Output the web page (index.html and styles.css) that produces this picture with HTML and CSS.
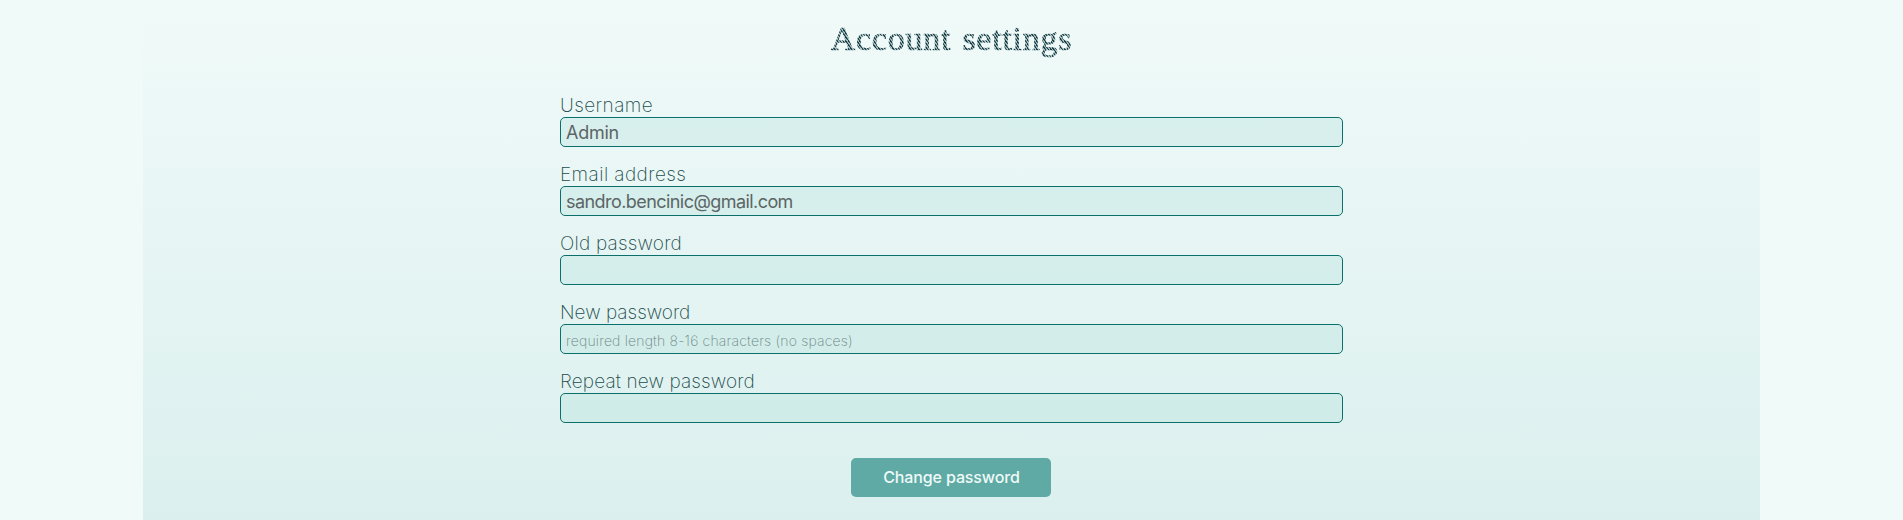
FILE: index.html
```html
<!DOCTYPE html>
<html lang="en">
<head>
<meta charset="utf-8">
<title>Account settings</title>
<link rel="stylesheet" href="styles.css">
</head>
<body>
<main class="panel">
  <h1 class="title">Account settings</h1>
  <form class="form">
    <div class="field"><label class="label label-wide" for="username">Username</label><input class="input name-value" id="username" type="text" value="Admin"></div>
    <div class="field"><label class="label label-wide" for="email">Email address</label><input class="input email-value" id="email" type="text" value="sandro.bencinic@gmail.com"></div>
    <div class="field"><label class="label label-old" for="old">Old password</label><input class="input" id="old" type="password"></div>
    <div class="field"><label class="label" for="new">New password</label><input class="input" id="new" type="password" placeholder="required length 8-16 characters (no spaces)"></div>
    <div class="field"><label class="label label-repeat" for="repeat">Repeat new password</label><input class="input" id="repeat" type="password"></div>
    <button class="submit" type="button">Change password</button>
  </form>
</main>
</body>
</html>
```
FILE: styles.css
```css
* { box-sizing: border-box; }
body {
  margin: 0;
  height: 520px;
  overflow: hidden;
  background: #f0faf9;
  font-family: Inter, "Liberation Sans", sans-serif;
}
.panel {
  width: 85%;
  height: 520px;
  margin: 0 auto;
  padding-top: 17px;
  background: linear-gradient(#f0faf9, #dbf0ee);
}
.title {
  width: max-content;
  height: 44px;
  margin: 0 auto;
  font: 400 34px/44px "Liberation Serif", serif;
  letter-spacing: 0.75px;
  word-spacing: 2px;
  color: transparent;
  -webkit-text-stroke: 0.7px transparent;
  background: repeating-linear-gradient(55deg, #1d3d44 0 0.9px, #a3bec0 1.4px 2.3px);
  -webkit-background-clip: text;
  background-clip: text;
}
.form {
  display: flex;
  flex-direction: column;
  width: 783px;
  margin: 32px auto 0;
}
.field {
  display: flex;
  flex-direction: column;
  height: 69px;
}
.label {
  height: 24px;
  padding-top: 1px;
  font-size: 19px;
  line-height: 24px;
  font-weight: 200;
  color: #234c4c;
}
.label-wide { letter-spacing: 0.42px; }
.label-old { letter-spacing: 0.2px; }
.label-repeat { letter-spacing: 0.12px; }
.input {
  width: 100%;
  height: 30px;
  padding: 1px 5px;
  border: 1px solid #0b706b;
  border-radius: 5px;
  outline: none;
  background: rgba(178, 223, 219, 0.32);
  font-family: inherit;
  font-size: 18px;
  font-weight: 400;
  color: #5c6566;
}
.name-value { letter-spacing: -0.25px; }
.email-value { letter-spacing: -0.56px; }
.input::placeholder {
  font-size: 14px;
  font-weight: 200;
  letter-spacing: 0.18px;
  color: #6f8584;
}
.submit {
  align-self: center;
  width: 200px;
  height: 39px;
  margin-top: 20px;
  padding: 0 0 2px;
  border: 0;
  border-radius: 5px;
  background: #5faaa5;
  color: #effaf8;
  font-family: inherit;
  font-size: 16px;
  font-weight: 500;
  letter-spacing: -0.12px;
}
```
